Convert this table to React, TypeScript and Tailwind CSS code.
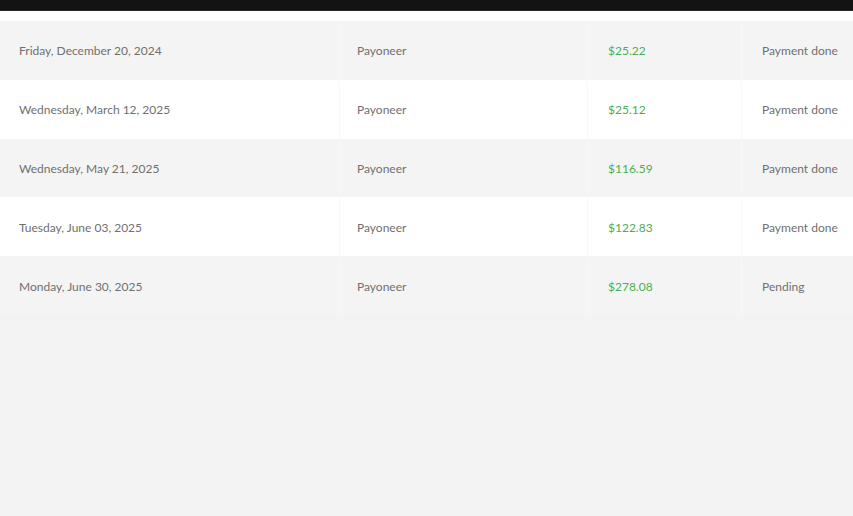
const ROWS = [
  { date: "Friday, December 20, 2024", method: "Payoneer", amount: "$25.22", status: "Payment done" },
  { date: "Wednesday, March 12, 2025", method: "Payoneer", amount: "$25.12", status: "Payment done" },
  { date: "Wednesday, May 21, 2025", method: "Payoneer", amount: "$116.59", status: "Payment done" },
  { date: "Tuesday, June 03, 2025", method: "Payoneer", amount: "$122.83", status: "Payment done" },
  { date: "Monday, June 30, 2025", method: "Payoneer", amount: "$278.08", status: "Pending" },
];

export default function App() {
  return (
    <div className="w-[853px] h-[516px] overflow-hidden bg-[#f3f3f3] text-[12px] text-[#707070]" style={{ fontFamily: "Lato, 'Noto Sans', sans-serif" }}>
      <div className="h-[11px] bg-[#131313] border-b border-[#2a2a2a]" />
      <div className="h-[10px] bg-white" />
      <div className="w-[900px]">
        {ROWS.map((r, i) => (
          <div key={i} className={"flex h-[58.8px] items-center pt-[2px] " + (i % 2 === 0 ? "bg-[#f4f4f4]" : "bg-white")}>
            <div className="w-[340px] h-full flex items-center pl-[19px] border-r border-[#f8f8f8]">{r.date}</div>
            <div className="w-[248px] h-full flex items-center pl-[17px] border-r border-[#f8f8f8]">{r.method}</div>
            <div className="w-[154px] h-full flex items-center pl-[20px] border-r border-[#f8f8f8] text-[#4caf50]">{r.amount}</div>
            <div className="flex-1 h-full flex items-center pl-[20px]">{r.status}</div>
          </div>
        ))}
      </div>
    </div>
  );
}
